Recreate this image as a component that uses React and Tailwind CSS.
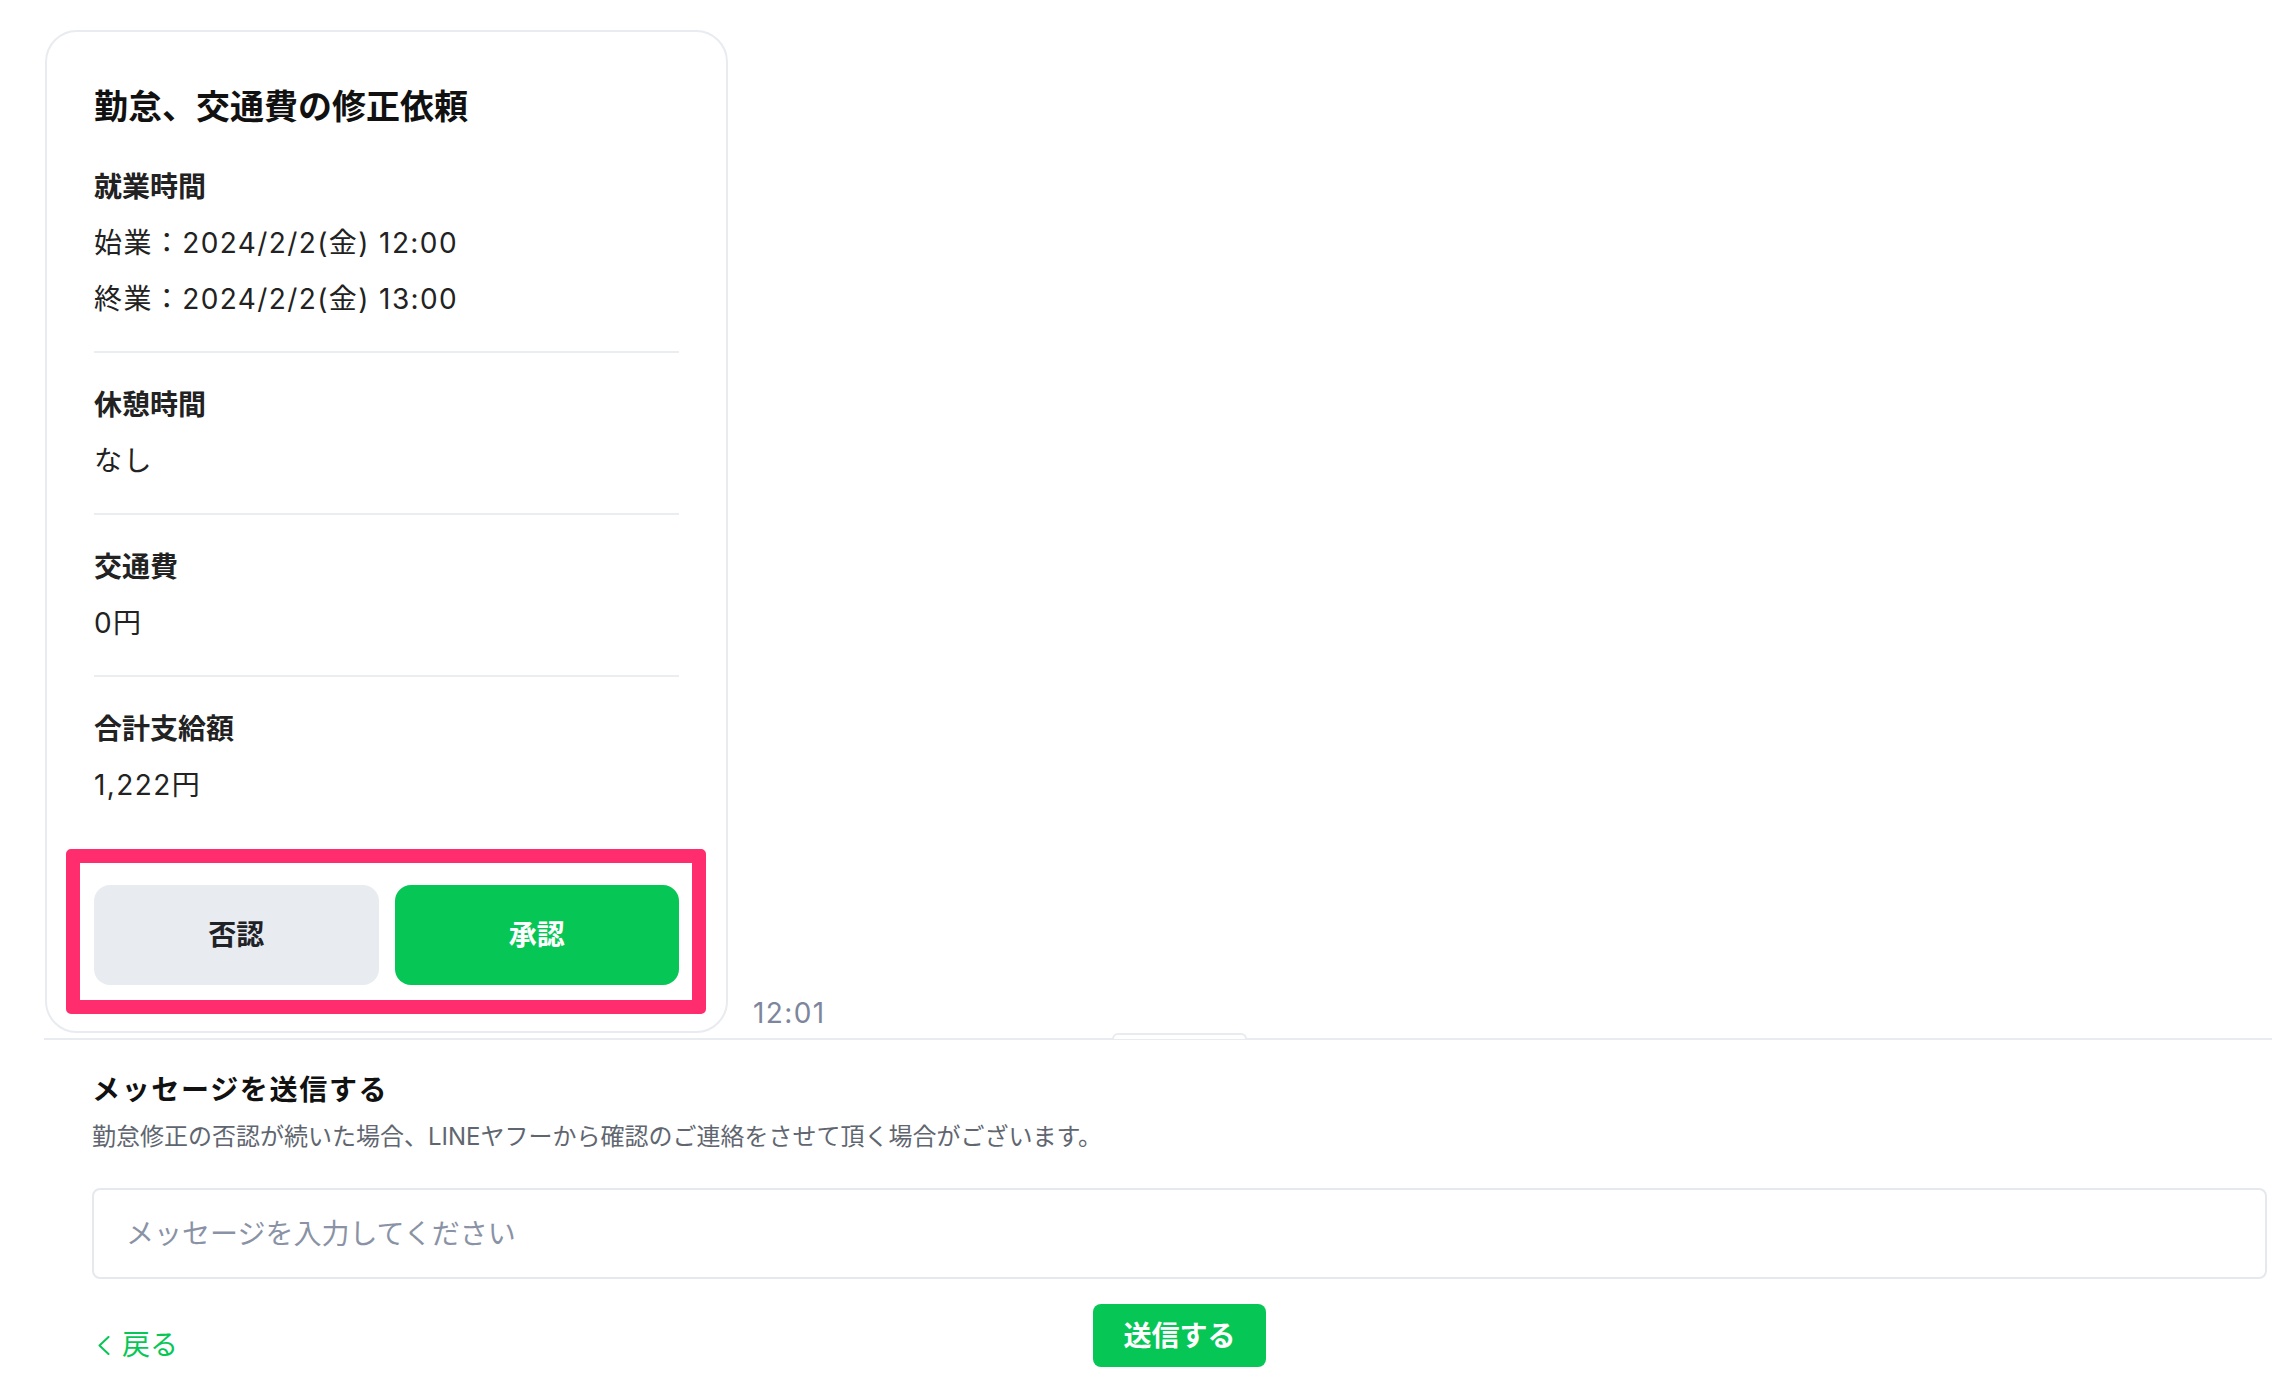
const font = { fontFamily: "Inter, 'Noto Sans CJK JP', sans-serif" }

const sections = [
  { label: '就業時間', values: ['始業：2024/2/2(金) 12:00', '終業：2024/2/2(金) 13:00'] },
  { label: '休憩時間', values: ['なし'] },
  { label: '交通費', values: ['0円'] },
  { label: '合計支給額', values: ['1,222円'] },
]

function RequestCard() {
  return (
    <div className="relative w-[683px] shrink-0 rounded-[32px] border-2 border-[#E8EBEF] bg-white px-[47px] pt-[47px] pb-[46px]">
      <h1 className="mb-6 text-[34px] font-bold leading-[56px] text-[#111]">勤怠、交通費の修正依頼</h1>

      {sections.map((s, i) => (
        <div
          key={s.label}
          className={`${i === 0 ? '' : 'pt-6'} ${i < sections.length - 1 ? 'border-b-2 border-[#EBEEF1] pb-6' : ''}`}
        >
          <div className="text-[28px] font-bold leading-[56px] text-[#222]">{s.label}</div>
          {s.values.map((v) => (
            <div key={v} className="text-[28px] leading-[56px] tracking-[0.05em] text-[#222]">{v}</div>
          ))}
        </div>
      ))}

      <div className="mt-[72px] grid grid-cols-2 gap-4">
        <button className="h-[100px] rounded-[16px] bg-[#E8ECF0] text-[28px] font-bold text-[#1F2328]">否認</button>
        <button className="h-[100px] rounded-[16px] bg-[#06C755] text-[28px] font-bold text-white">承認</button>
      </div>

      {/* highlight annotation */}
      <div className="pointer-events-none absolute left-[19px] top-[817px] h-[165px] w-[640px] rounded-[5px] border-[14px] border-[#FF2D6E]"></div>
    </div>
  )
}

function MessageForm() {
  return (
    <div className="relative ml-[44px] mt-[5px] border-t-2 border-[#E8ECF0] pl-12 pr-[5px] pt-[30px]">
      {/* chip peeking above the line */}
      <div className="absolute left-[1068px] top-[-7px] h-[6px] w-[135px] rounded-t-[10px] border-x-2 border-t-2 border-[#E8ECF0] bg-white"></div>

      <h2 className="text-[28px] font-bold leading-[40px] tracking-[0.06em] text-[#111]">メッセージを送信する</h2>
      <p className="mt-[9px] text-[24px] leading-[36px] text-[#5F6670]">
        勤怠修正の否認が続いた場合、LINEヤフーから確認のご連絡をさせて頂く場合がございます。
      </p>

      <div className="mt-[33px] flex h-[91px] items-center rounded-[8px] border-2 border-[#E5E9EE] px-8">
        <span className="text-[28px] text-[#8A93A6]">メッセージを入力してください</span>
      </div>

      <div className="mt-[25px] grid grid-cols-[1fr_auto_1fr]">
        <a className="mb-[2px] flex items-center gap-[12px] self-end pl-[6px] text-[28px] leading-[40px] text-[#06C755]">
          <svg width="12" height="19" viewBox="0 0 12 19" fill="none">
            <path d="M10.5 1L1.5 9.5L10.5 18" stroke="#06C755" strokeWidth="2" strokeLinecap="round" strokeLinejoin="round" />
          </svg>
          戻る
        </a>
        <button className="h-[63px] w-[173px] rounded-[8px] bg-[#06C755] text-[28px] font-bold text-white">送信する</button>
        <div></div>
      </div>
    </div>
  )
}

export default function App() {
  return (
    <div className="min-h-screen bg-white" style={font}>
      <div className="flex items-end pl-[45px] pt-[30px]">
        <RequestCard />
        <span className="ml-[25px] text-[28px] leading-[40px] tracking-[0.05em] text-[#7D869C]">12:01</span>
      </div>
      <MessageForm />
    </div>
  )
}
